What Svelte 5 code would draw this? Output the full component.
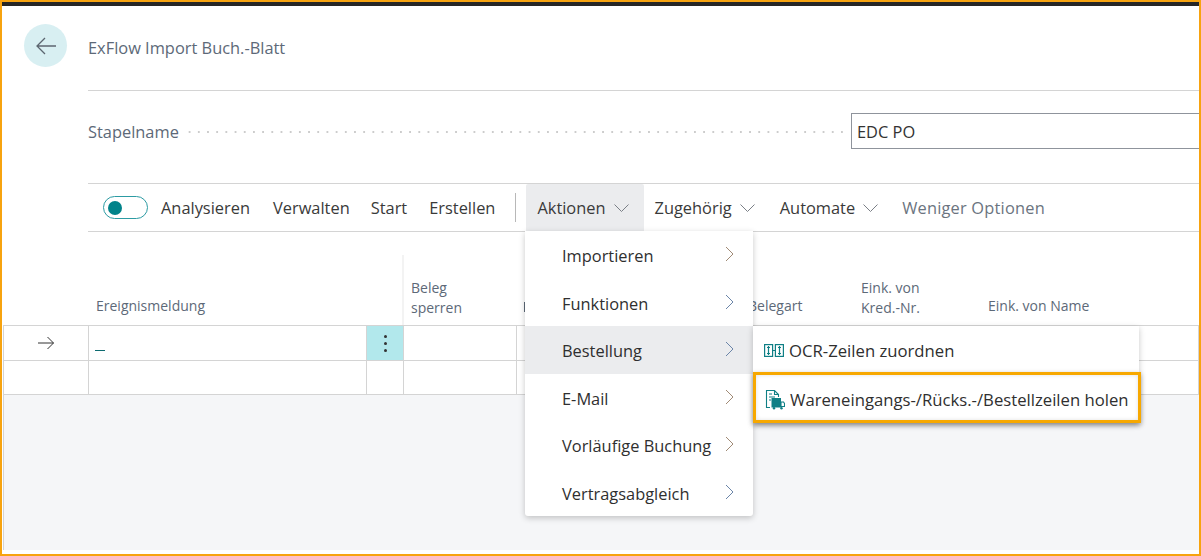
<script lang="ts">
	const mainMenu = [
		{ label: 'Importieren', tone: 'tan' },
		{ label: 'Funktionen', tone: 'blue' },
		{ label: 'Bestellung', tone: 'blue', current: true },
		{ label: 'E-Mail', tone: 'tan' },
		{ label: 'Vorläufige Buchung', tone: 'tan' },
		{ label: 'Vertragsabgleich', tone: 'blue' }
	];
	const dropItems = ['Zugehörig', 'Automate'];
</script>

<div class="frame">
	<div class="topbar"></div>

	<header class="head">
		<button class="back" aria-label="Zurück">
			<svg width="22" height="18" viewBox="0 0 22 18">
				<path d="M21 9H2M10 1 2 9l8 8" fill="none" stroke="#5c6670" stroke-width="1.3" />
			</svg>
		</button>
		<div class="title">ExFlow Import Buch.-Blatt</div>
	</header>

	<section class="field">
		<span class="field-label">Stapelname</span>
		<span class="dots"></span>
		<div class="field-input">EDC PO</div>
	</section>

	<nav class="toolbar">
		<span class="toggle"><span class="knob"></span></span>
		<span class="item wide">Analysieren</span>
		<span class="item tight">Verwalten</span>
		<span class="item">Start</span>
		<span class="item last">Erstellen</span>
		<span class="sep"></span>
		<span class="item drop open">Aktionen <svg class="chev" width="15" height="8" viewBox="0 0 15 8"><path d="M.5.5 7.500 7.500l7-7" /></svg></span>
		{#each dropItems as item}
			<span class="item drop">{item} <svg class="chev" width="15" height="8" viewBox="0 0 15 8"><path d="M.5.5 7.500 7.500l7-7" /></svg></span>
		{/each}
		<span class="item muted">Weniger Optionen</span>
	</nav>

	<section class="grid">
		<div class="row headrow">
			<div class="c"></div>
			<div class="c">Ereignismeldung</div>
			<div class="c"></div>
			<div class="c two-line divided">Beleg<br />sperren</div>
			<div class="c"><span class="sliver"></span></div>
			<div class="c">Belegart</div>
			<div class="c two-line">Eink. von<br />Kred.-Nr.</div>
			<div class="c">Eink. von Name</div>
		</div>
		<div class="row body tall">
			<div class="c">
				<svg width="18" height="14" viewBox="0 0 18 14">
					<path d="M1 7h15.500M10.500 1l6 6-6 6" fill="none" stroke="#333" stroke-width="1" />
				</svg>
			</div>
			<div class="c msg"><span class="cursor"></span></div>
			<div class="c kebab"><span></span><span></span><span></span></div>
			<div class="c"></div>
			<div class="c"></div>
			<div class="c"></div>
			<div class="c"></div>
			<div class="c"></div>
		</div>
		<div class="row body">
			<div class="c"></div>
			<div class="c"></div>
			<div class="c"></div>
			<div class="c"></div>
			<div class="c"></div>
			<div class="c"></div>
			<div class="c"></div>
			<div class="c"></div>
		</div>
	</section>

	<div class="rest"></div>

	<ul class="menu main-menu">
		{#each mainMenu as entry}
			<li class:current={entry.current}>
				<span>{entry.label}</span>
				<svg class="next {entry.tone}" width="9" height="16" viewBox="0 0 9 16"><path d="M1 1l7 7-7 7" /></svg>
			</li>
		{/each}
	</ul>

	<ul class="menu sub-menu">
		<li>
			<svg width="20" height="13" viewBox="0 0 20 13" fill="none" stroke="#0f7f85" stroke-width="1.200">
				<rect x=".6" y=".6" width="8" height="11.800" />
				<rect x="11.400" y=".6" width="8" height="11.800" />
				<path d="M8.500 6.500h3M4.500 2v9M15.500 2v9M3 3.500h3M3 9.500h3M14 3.500h3M14 9.500h3" />
			</svg>
			<span>OCR-Zeilen zuordnen</span>
		</li>
		<li class="focused">
			<svg width="20" height="21" viewBox="0 0 20 21" fill="none" stroke="#0f7f85" stroke-width="1.100">
				<path d="M5 18.500H1.500v-17h8l4 4V8M9.500 1.500v4h4M4 5h3M4 8h6M4 11h2" />
				<rect x="6.500" y="9" width="9.500" height="9.500" fill="#0f7f85" stroke="none" />
				<path d="M16 13h2.500l1 1.500v3H16z" />
				<circle cx="9" cy="19.300" r="1.200" fill="#0f7f85" stroke="none" />
				<circle cx="16.500" cy="19.300" r="1.200" fill="#0f7f85" stroke="none" />
			</svg>
			<span>Wareneingangs-/Rücks.-/Bestellzeilen holen</span>
		</li>
	</ul>
</div>

<style>
	:global(body) {
		margin: 0;
		background: #fff;
	}

	.frame {
		position: relative;
		box-sizing: border-box;
		width: 1201px;
		height: 556px;
		border: 2px solid #f7a30f;
		display: flex;
		flex-direction: column;
		overflow: hidden;
		font-family: 'Open Sans', 'Noto Sans', sans-serif;
		font-size: 16.400px;
		color: #333;
		background: #fff;
	}

	.topbar {
		height: 4px;
		background: #262626;
		flex: none;
	}

	.head {
		height: 84px;
		margin-left: 86px;
		border-bottom: 1px solid #d4d4d4;
		position: relative;
		flex: none;
	}

	.back {
		position: absolute;
		left: -64px;
		top: 18px;
		width: 43px;
		height: 43px;
		border: 0;
		padding: 0;
		border-radius: 50%;
		background: #d8eff2;
		display: flex;
		align-items: center;
		justify-content: center;
	}

	.title {
		padding-top: 31px;
		line-height: 22px;
		color: #5d6978;
	}

	.field {
		height: 93px;
		margin-left: 86px;
		border-bottom: 1px solid #d4d4d4;
		display: flex;
		align-items: flex-start;
		flex: none;
		box-sizing: border-box;
		padding-top: 22px;
	}

	.field-label {
		line-height: 38px;
		color: #5d6978;
	}

	.dots {
		flex: 1;
		margin: 18px 5px 0 6px;
		height: 2px;
		background-image: radial-gradient(circle, #cccccc 1px, transparent 1.100px);
		background-size: 9.200px 2px;
	}

	.field-input {
		width: 348px;
		height: 36px;
		box-sizing: border-box;
		border: 1px solid #8f949c;
		border-right: 0;
		padding-left: 5px;
		line-height: 36px;
		color: #333;
	}

	.toolbar {
		height: 47px;
		margin-left: 86px;
		padding-left: 15px;
		border-bottom: 1px solid #d4d4d4;
		display: flex;
		align-items: center;
		flex: none;
		color: #3a3a3a;
	}

	.toggle {
		width: 45px;
		height: 23px;
		box-sizing: border-box;
		border: 1px solid #2c9ba3;
		border-radius: 12px;
		display: flex;
		align-items: center;
		padding-left: 4px;
		margin-right: 13px;
	}

	.knob {
		width: 14px;
		height: 14px;
		border-radius: 50%;
		background: #00838a;
	}

	.item {
		margin-right: 22px;
		white-space: nowrap;
	}

	.item.wide {
		margin-right: 23px;
	}

	.item.tight {
		margin-right: 21px;
	}

	.item.last {
		margin-right: 20px;
	}

	.sep {
		width: 1px;
		height: 29px;
		background: #b8b8b8;
		margin-right: 10px;
	}

	.drop {
		display: flex;
		align-items: center;
		gap: 8px;
		margin-right: 0;
		height: 47px;
		padding: 0 14px 0 11px;
	}

	.drop.open {
		background: #ebecee;
		border-radius: 2px 2px 0 0;
		padding-right: 15px;
	}

	.chev {
		fill: none;
		stroke: #7a7f86;
		stroke-width: 1;
	}

	.muted {
		color: #6b7480;
		margin-left: 10px;
		letter-spacing: 0.2px;
	}

	.grid {
		flex: none;
	}

	.row {
		display: grid;
		grid-template-columns: 85px 278px 37px 113px 224px 113px 127px 1fr;
		margin-left: 1px;
		box-sizing: border-box;
		border-bottom: 1px solid #d4d4d4;
	}

	.headrow {
		height: 94px;
		padding-left: 1px;
		font-size: 14px;
		line-height: 20px;
		color: #5d6978;
	}

	.headrow .c {
		display: flex;
		align-items: flex-end;
		padding: 0 0 9px 7px;
	}

	.headrow .two-line {
		display: block;
		align-self: end;
		padding-bottom: 7px;
	}

	.headrow .divided {
		box-shadow: -2px 0 0 #f3f3f3;
		padding-top: 23px;
	}

	.sliver {
		width: 1px;
		height: 10px;
		margin-bottom: 4px;
		background: #5d6978;
	}

	.body {
		height: 34px;
		border-left: 1px solid #d4d4d4;
	}

	.body.tall {
		height: 35px;
	}

	.body .c {
		border-right: 1px solid #d4d4d4;
		display: flex;
		align-items: center;
		justify-content: center;
		box-sizing: border-box;
	}

	.body .msg {
		justify-content: flex-start;
		align-items: flex-end;
		padding: 0 0 9px 6px;
	}

	.cursor {
		width: 10px;
		height: 1px;
		background: #0d6b70;
	}

	.body .kebab {
		background: #b2e8ec;
		flex-direction: column;
		gap: 4px;
	}

	.kebab span {
		width: 3px;
		height: 3px;
		border-radius: 50%;
		background: #333;
	}

	.rest {
		flex: 1;
		background: #f5f6f8;
		border-left: 1px solid #d4d4d4;
		margin-left: 1px;
		margin-bottom: 4px;
	}

	.menu {
		position: absolute;
		list-style: none;
		margin: 0;
		padding: 0;
		background: #fff;
		box-shadow: 0 2px 6px rgba(0, 0, 0, 0.22);
		color: #2f2f2f;
	}

	.main-menu {
		left: 523px;
		top: 229px;
		width: 228px;
		height: 285px;
		border-radius: 0 0 3px 3px;
	}

	.main-menu li {
		height: 47.500px;
		display: flex;
		align-items: center;
		justify-content: space-between;
		padding: 2px 19px 0 37px;
		box-sizing: border-box;
	}

	.main-menu li.current {
		background: #ebecee;
	}

	.next {
		fill: none;
		stroke-width: 1;
		margin-top: -3px;
	}

	.next.tan {
		stroke: #a08a75;
	}

	.next.blue {
		stroke: #6b85a8;
	}

	.sub-menu {
		left: 751px;
		top: 324px;
		width: 386px;
		font-size: 16.700px;
	}

	.sub-menu li {
		height: 46px;
		display: flex;
		align-items: center;
		gap: 5px;
		padding: 3px 0 0 11px;
		box-sizing: border-box;
	}

	.sub-menu li.focused {
		outline: 3px solid #f7a800;
		outline-offset: -3px;
		height: 51px;
		width: 388px;
		padding-left: 12px;
		box-shadow: inset 0 0 4px 3px rgba(0, 0, 0, 0.12), 0 2px 5px rgba(0, 0, 0, 0.35);
	}
</style>
